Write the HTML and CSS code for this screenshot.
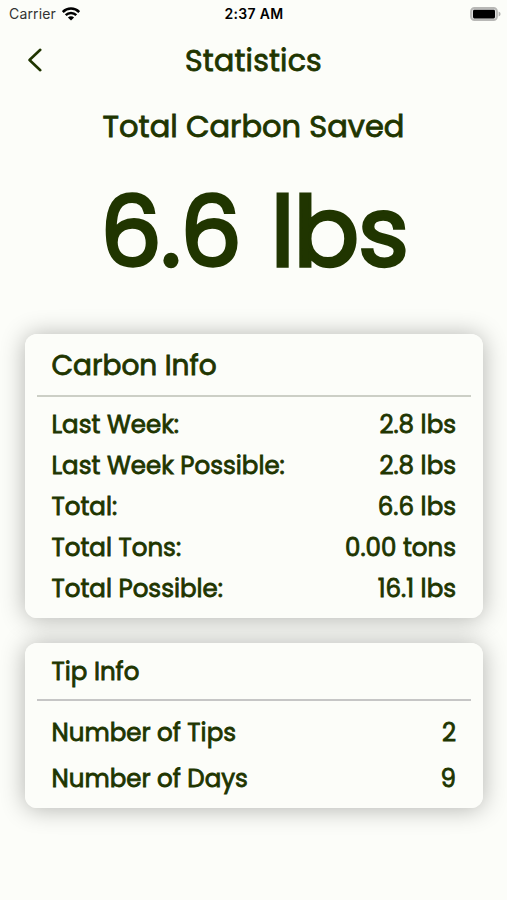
FILE: index.html
```html
<!DOCTYPE html>
<html lang="en">

<head>
  <meta charset="UTF-8">
  <meta name="viewport" content="width=device-width, initial-scale=1.0">
  <title>Statistics</title>
  <link rel="stylesheet" href="styles.css">
</head>

<body>
  <div class="status-bar">
    <div class="carrier">
      <span>Carrier</span>
      <svg class="wifi" width="18" height="14" viewBox="0 0 18 14">
        <path d="M.8 5a11.6 11.6 0 0 1 16.4 0M3.7 8.1a7.5 7.5 0 0 1 10.6 0" fill="none" stroke="#000" stroke-width="2.5" />
        <path d="M9 13.6L5.9 10.6a4.4 4.4 0 0 1 6.2 0z" />
      </svg>
    </div>
    <span class="time">2:37 AM</span>
    <svg class="battery" width="31" height="14" viewBox="0 0 31 14">
      <rect x="1" y="1" width="26" height="12" rx="3.4" fill="#ddd" stroke="#b8b8b6" stroke-width="1.8" />
      <rect x="3" y="2.8" width="22" height="8.6" rx="1.4" />
      <path d="M28.6 4.6q2 .8 2 2.4t-2 2.4z" fill="#b2b2b0" />
    </svg>
  </div>

  <header class="nav">
    <svg class="back" width="16" height="26" viewBox="0 0 16 26">
      <path d="M13.3 2.8L2.5 13l10.8 10.2" fill="none" stroke="#203500" stroke-width="2.6" stroke-linecap="round" stroke-linejoin="round" />
    </svg>
    <h1>Statistics</h1>
  </header>

  <section class="total">
    <h2>Total Carbon Saved</h2>
    <p class="amount">6.6 lbs</p>
  </section>

  <main class="cards">
    <section class="card carbon">
      <h3>Carbon Info</h3>
      <div class="rows">
        <div class="row"><span>Last Week:</span><span>2.8 lbs</span></div>
        <div class="row"><span>Last Week Possible:</span><span>2.8 lbs</span></div>
        <div class="row"><span>Total:</span><span>6.6 lbs</span></div>
        <div class="row"><span>Total Tons:</span><span>0.00 tons</span></div>
        <div class="row"><span>Total Possible:</span><span>16.1 lbs</span></div>
      </div>
    </section>

    <section class="card tips">
      <h3>Tip Info</h3>
      <div class="rows">
        <div class="row"><span>Number of Tips</span><span>2</span></div>
        <div class="row"><span>Number of Days</span><span>9</span></div>
      </div>
    </section>
  </main>
</body>

</html>
```
FILE: styles.css
```css
* {
  box-sizing: border-box;
}

body {
  margin: 0;
  height: 900px;
  overflow: hidden;
  background: #fcfdf9;
  color: #203500;
  font-family: Poppins, Inter, sans-serif;
  -webkit-text-stroke: 0.8px #203500;
}

h1,
h2,
h3,
p {
  margin: 0;
  font-weight: 400;
}

.status-bar {
  display: grid;
  grid-template-columns: 1fr auto 1fr;
  align-items: center;
  height: 27px;
  padding: 0 6px 0 9px;
  color: #000;
  font-family: Inter, sans-serif;
  font-size: 14px;
  -webkit-text-stroke: 0;
}

.carrier {
  display: flex;
  align-items: center;
  gap: 6px;
  color: #333;
  letter-spacing: 0.15px;
}

.time {
  margin-right: 2px;
  font-weight: 600;
  letter-spacing: 0.3px;
}

.battery {
  justify-self: end;
}

.nav {
  display: grid;
  grid-template-columns: 16px 1fr 16px;
  align-items: center;
  height: 66px;
  padding: 0 27px;
}

h1 {
  padding-top: 1px;
  font-size: 30px;
  letter-spacing: 0.2px;
  text-align: center;
}

.total {
  text-align: center;
}

h2 {
  font-size: 30.5px;
  line-height: 67px;
}

.amount {
  padding: 1px 0 0 1px;
  font-size: 97px;
  letter-spacing: -1px;
  line-height: 142px;
  word-spacing: 5px;
  -webkit-text-stroke-width: 3.3px;
}

.cards {
  display: flex;
  flex-direction: column;
  gap: 25px;
  padding: 31px 24.5px 0 25px;
  isolation: isolate;
}

.card {
  display: grid;
  align-content: start;
  padding: 0 11.5px;
  border-radius: 12px;
  background: #fcfdf9;
}

/* shadow sits below both cards so it never falls on the other one */
.card::before {
  content: "";
  grid-area: 1 / 1 / 3 / 2;
  z-index: -1;
  margin: 0 -11.5px;
  border-radius: 12px;
  box-shadow: 0 1px 24px rgba(0, 0, 0, 0.3);
}

.card h3 {
  grid-area: 1 / 1;
  padding: 2px 15px 0;
  border-bottom: 2px solid #cccfc6;
  font-size: 28px;
  line-height: 59px;
}

.card.tips h3 {
  padding-top: 1px;
  border-bottom-color: #c6c6c6;
  font-size: 24.5px;
  line-height: 55px;
}

.rows {
  grid-area: 2 / 1;
  padding: 7px 15px 9px;
}

.row {
  display: flex;
  justify-content: space-between;
  font-size: 24.5px;
  line-height: 41.1px;
}

.tips .rows {
  padding: 9px 15px 6.5px;
}

.tips .row {
  line-height: 45.7px;
}
```
